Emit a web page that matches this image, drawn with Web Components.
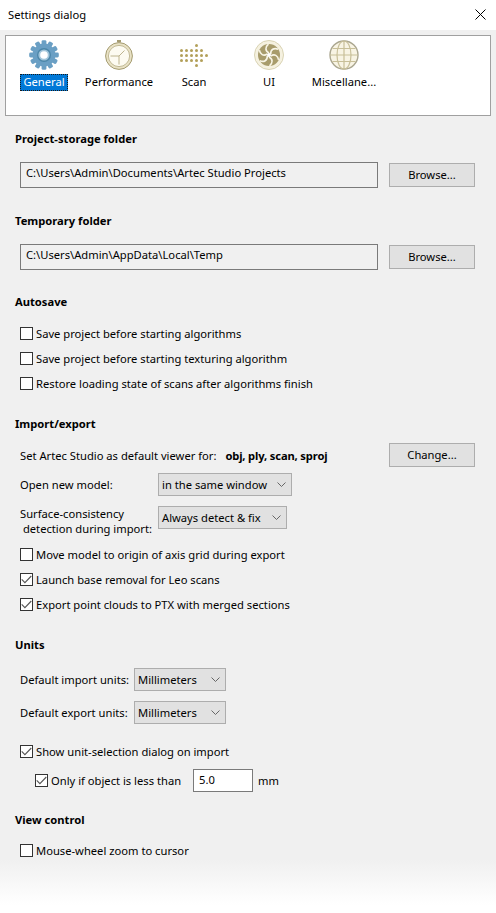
<!DOCTYPE html>
<html>
<head>
<meta charset="utf-8">
<title>Settings dialog</title>
<style>
  html, body { margin: 0; padding: 0; }
  body { width: 496px; height: 913px; overflow: hidden; font: 11.2px "Noto Sans", "Liberation Sans", sans-serif; color: #000; }
</style>
</head>
<body>
<settings-dialog>
  <settings-tabs>
    <settings-tab label="General" icon="gear" active></settings-tab>
    <settings-tab label="Performance" icon="clock"></settings-tab>
    <settings-tab label="Scan" icon="dots"></settings-tab>
    <settings-tab label="UI" icon="iris"></settings-tab>
    <settings-tab label="Miscellane..." icon="globe"></settings-tab>
  </settings-tabs>

  <settings-section title="Project-storage folder" style="--top:15px;--gap:15px">
    <folder-row value="C:\Users\Admin\Documents\Artec Studio Projects"></folder-row>
  </settings-section>
  <settings-section title="Temporary folder" style="--top:25px;--gap:15px">
    <folder-row value="C:\Users\Admin\AppData\Local\Temp"></folder-row>
  </settings-section>

  <settings-section title="Autosave" style="--top:24px;--gap:14px;--rows:6px">
    <check-row>Save project before starting algorithms</check-row>
    <check-row>Save project before starting texturing algorithm</check-row>
    <check-row>Restore loading state of scans after algorithms finish</check-row>
  </settings-section>

  <settings-section title="Import/export" style="--top:23px;--gap:11px">
    <viewer-row></viewer-row>
    <combo-row combo="in the same window" width="134" label-width="138" pad="6">Open new model:</combo-row>
    <combo-row combo="Always detect &amp; fix" width="129" label-width="138" pad="10" two-line><span>Surface-consistency<br>&nbsp;detection during import:</span></combo-row>
    <check-row style="margin-top:9px">Move model to origin of axis grid during export</check-row>
    <check-row style="margin-top:6px" checked>Launch base removal for Leo scans</check-row>
    <check-row style="margin-top:6px" checked>Export point clouds to PTX with merged sections</check-row>
  </settings-section>

  <settings-section title="Units" style="--top:23px;--gap:15px">
    <combo-row combo="Millimeters" width="92" label-width="114" pad="0">Default import units:</combo-row>
    <combo-row combo="Millimeters" width="92" label-width="114" pad="10">Default export units:</combo-row>
    <check-row style="margin-top:18px" checked>Show unit-selection dialog on import</check-row>
    <threshold-row></threshold-row>
  </settings-section>

  <settings-section title="View control" style="--top:20px;--gap:13px">
    <check-row>Mouse-wheel zoom to cursor</check-row>
  </settings-section>
</settings-dialog>

<script>
// Icono de cada pestaña
const ICONS = {
  gear: () => {
    let teeth = "";
    for (let i = 0; i < 12; i++) {
      teeth += `<rect x="12.6" y="0.2" width="4.8" height="6" rx="1.4" fill="#6a9fc4" transform="rotate(${i * 30} 15 15)"/>`;
    }
    return `<svg width="30" height="30" viewBox="0 0 30 30">${teeth}
      <circle cx="15" cy="15" r="11.4" fill="#6a9fc4"/>
      <circle cx="15" cy="15" r="7" fill="#4b86a9"/>
      <circle cx="15" cy="15" r="5.6" fill="#a3c6db"/>
      <circle cx="15" cy="15" r="3.8" fill="#fff"/></svg>`;
  },
  clock: () => `<svg width="30" height="30" viewBox="0 0 30 30">
      <rect x="13" y="0" width="4" height="2.4" fill="#a59c72"/>
      <circle cx="15" cy="16" r="13.4" fill="#e8e1c4" stroke="#a59c72" stroke-width="1"/>
      <circle cx="15" cy="16" r="10.6" fill="#fdfbf1" stroke="#b5ac84" stroke-width=".8"/>
      <path d="M15 16H6.5M15 16v8.5M15 16l5.5-5.5" stroke="#b5ac84" stroke-width=".9" fill="none"/></svg>`,
  dots: () => {
    let dots = "";
    const cols = [[3], [0, 1, 2, 3, 4], [0, 1, 2, 3, 4, 5], [0, 1, 2, 3, 4], [3]];
    cols.forEach((c, r) => c.forEach(x => {
      dots += `<circle cx="${2.5 + x * 5}" cy="${5.5 + r * 5}" r="1.5" fill="#b3a05a"/>`;
    }));
    return `<svg width="30" height="30" viewBox="0 0 30 30">${dots}</svg>`;
  },
  iris: () => {
    let blades = "";
    for (let i = 0; i < 6; i++) {
      blades += `<path d="M15 13C11 11 11 7 14.5 4.2" stroke="#f8f5e6" stroke-width="1.6" fill="none" transform="rotate(${i * 60} 15 15)"/>`;
    }
    return `<svg width="30" height="30" viewBox="0 0 30 30">
      <circle cx="15" cy="15" r="14.5" fill="#f5f1e0" stroke="#d9d3b4"/>
      <circle cx="15" cy="15" r="11" fill="#a89c6c"/>${blades}
      <circle cx="15" cy="15" r="2" fill="#fff"/></svg>`;
  },
  globe: () => `<svg width="30" height="30" viewBox="0 0 30 30">
      <circle cx="15" cy="15" r="14" fill="#f8f4e4" stroke="#aaa68f" stroke-width="1.4"/>
      <ellipse cx="15" cy="15" rx="7" ry="14" fill="none" stroke="#c8bf98" stroke-width="1.2"/>
      <path d="M15 1v28M1 15h28M3.5 8.5h23M3.5 21.5h23" stroke="#c8bf98" stroke-width="1.2" fill="none"/></svg>`
};

// Diálogo completo
class SettingsDialog extends HTMLElement {
  constructor() {
    super();
    this.attachShadow({ mode: "open" });
    this.shadowRoot.innerHTML = `
      <style>
        :host { display: flex; flex-direction: column; width: 496px; height: 913px; background: linear-gradient(#f0f0f0 0, #f0f0f0 860px, #fff 905px); }
        .title { box-sizing: border-box; height: 30px; flex: none; background: #fff; display: flex; align-items: center; justify-content: space-between; padding: 0 10px 2px 8px; }
        .body { padding: 5px 5px 0; display: flex; flex-direction: column; }
      </style>
      <div class="title"><span>Settings dialog</span>
        <svg width="11" height="11" viewBox="0 0 11 11"><path d="M.5.5l10 10M10.5.5l-10 10" stroke="#000" fill="none"/></svg>
      </div>
      <div class="body"><slot></slot></div>`;
  }
}

class SettingsTabs extends HTMLElement {
  constructor() {
    super();
    this.attachShadow({ mode: "open" });
    this.shadowRoot.innerHTML = `
      <style>
        :host { display: flex; box-sizing: border-box; height: 81px; background: #fff; border: 1px solid #a0a0a0; padding-left: .5px; }
      </style>
      <slot></slot>`;
  }
}

class SettingsTab extends HTMLElement {
  constructor() {
    super();
    this.attachShadow({ mode: "open" });
    const label = this.getAttribute("label");
    const icon = ICONS[this.getAttribute("icon")]();
    this.shadowRoot.innerHTML = `
      <style>
        :host { display: flex; flex-direction: column; align-items: center; width: 75px; flex: none; padding-top: 4px; }
        .icon { height: 30px; display: flex; justify-content: center; }
        .label { margin-top: 4px; line-height: 16px; padding: 0 3px 1px; white-space: nowrap; }
        :host([active]) .label { background: #0078d7; color: #fff; outline: 1px dotted #1a1a1a; outline-offset: -1px; }
      </style>
      <div class="icon">${icon}</div>
      <div class="label">${label}</div>`;
  }
}

class SettingsSection extends HTMLElement {
  constructor() {
    super();
    this.attachShadow({ mode: "open" });
    this.shadowRoot.innerHTML = `
      <style>
        :host { display: block; padding: var(--top, 20px) 0 0 10px; }
        h2 { margin: 0 0 var(--gap, 14px); font-size: inherit; line-height: 16px; font-weight: 700; }
        .rows { display: flex; flex-direction: column; gap: var(--rows, 0px); padding-left: 5px; }
      </style>
      <h2>${this.getAttribute("title")}</h2>
      <div class="rows"><slot></slot></div>`;
  }
}

class FolderRow extends HTMLElement {
  constructor() {
    super();
    this.attachShadow({ mode: "open" });
    this.shadowRoot.innerHTML = `
      <style>
        :host { display: flex; align-items: center; gap: 11px; width: 455px; }
        .path { box-sizing: border-box; width: 358px; height: 26px; border: 1px solid #7a7a7a; padding: 2px 5px; line-height: 16px; }
      </style>
      <div class="path">${this.getAttribute("value")}</div>
      <push-button>Browse...</push-button>`;
  }
}

class PushButton extends HTMLElement {
  constructor() {
    super();
    this.attachShadow({ mode: "open" });
    this.shadowRoot.innerHTML = `
      <style>
        :host { display: flex; align-items: center; justify-content: center; box-sizing: border-box; width: 86px; height: 24px; padding-bottom: 1px; background: #e1e1e1; border: 1px solid #adadad; flex: none; }
      </style>
      <slot></slot>`;
  }
}

class CheckRow extends HTMLElement {
  constructor() {
    super();
    this.attachShadow({ mode: "open" });
    const mark = this.hasAttribute("checked")
      ? `<svg width="11" height="9" viewBox="0 0 11 9"><path d="M.7 4.4l3.2 3.2L10.3 1" stroke="#555" stroke-width="1.1" fill="none"/></svg>`
      : "";
    this.shadowRoot.innerHTML = `
      <style>
        :host { display: flex; align-items: center; gap: 3px; height: 19px; white-space: nowrap; }
        .box { box-sizing: border-box; width: 13px; height: 13px; flex: none; background: #fff; border: 1px solid #333; display: flex; align-items: center; justify-content: center; }
      </style>
      <div class="box">${mark}</div>
      <slot></slot>`;
  }
}

class ComboBox extends HTMLElement {
  constructor() {
    super();
    this.attachShadow({ mode: "open" });
    this.shadowRoot.innerHTML = `
      <style>
        :host { display: flex; align-items: center; justify-content: space-between; box-sizing: border-box; height: 23px; background: #e1e1e1; border: 1px solid #adadad; padding: 0 5px 0 3px; flex: none; white-space: nowrap; }
      </style>
      <span><slot></slot></span>
      <svg width="9" height="5" viewBox="0 0 9 5"><path d="M.5.5l4 4 4-4" stroke="#666" fill="none"/></svg>`;
  }
}

class ComboRow extends HTMLElement {
  constructor() {
    super();
    this.attachShadow({ mode: "open" });
    const width = this.getAttribute("width");
    const labelWidth = this.getAttribute("label-width");
    const pad = this.getAttribute("pad") || 0;
    const align = this.hasAttribute("two-line") ? "flex-start" : "center";
    this.shadowRoot.innerHTML = `
      <style>
        :host { display: flex; align-items: ${align}; margin-top: ${pad}px; line-height: 15px; }
        .label { width: ${labelWidth}px; flex: none; white-space: nowrap; }
      </style>
      <div class="label"><slot></slot></div>
      <combo-box style="width:${width}px">${this.getAttribute("combo").replace("&", "&amp;")}</combo-box>`;
  }
}

class ViewerRow extends HTMLElement {
  constructor() {
    super();
    this.attachShadow({ mode: "open" });
    this.shadowRoot.innerHTML = `
      <style>
        :host { display: flex; align-items: center; width: 455px; height: 24px; }
        .text { flex: 1; white-space: nowrap; }
        b { margin-left: 6px; letter-spacing: -.15px; }
      </style>
      <div class="text">Set Artec Studio as default viewer for: <b>obj, ply, scan, sproj</b></div>
      <push-button>Change...</push-button>`;
  }
}

class ThresholdRow extends HTMLElement {
  constructor() {
    super();
    this.attachShadow({ mode: "open" });
    this.shadowRoot.innerHTML = `
      <style>
        :host { display: flex; align-items: center; height: 23px; margin-top: 8px; padding-left: 15px; }
        check-row { width: 158px; flex: none; }
        .input { box-sizing: border-box; width: 60px; height: 23px; background: #fff; border: 1px solid #7a7a7a; padding: 2px 5px; line-height: 16px; }
        .unit { margin-left: 5px; }
      </style>
      <check-row checked>Only if object is less than</check-row>
      <div class="input">5.0</div>
      <span class="unit">mm</span>`;
  }
}

// Registrar los componentes
customElements.define("settings-dialog", SettingsDialog);
customElements.define("settings-tabs", SettingsTabs);
customElements.define("settings-tab", SettingsTab);
customElements.define("settings-section", SettingsSection);
customElements.define("push-button", PushButton);
customElements.define("folder-row", FolderRow);
customElements.define("check-row", CheckRow);
customElements.define("combo-box", ComboBox);
customElements.define("combo-row", ComboRow);
customElements.define("viewer-row", ViewerRow);
customElements.define("threshold-row", ThresholdRow);
</script>
</body>
</html>
